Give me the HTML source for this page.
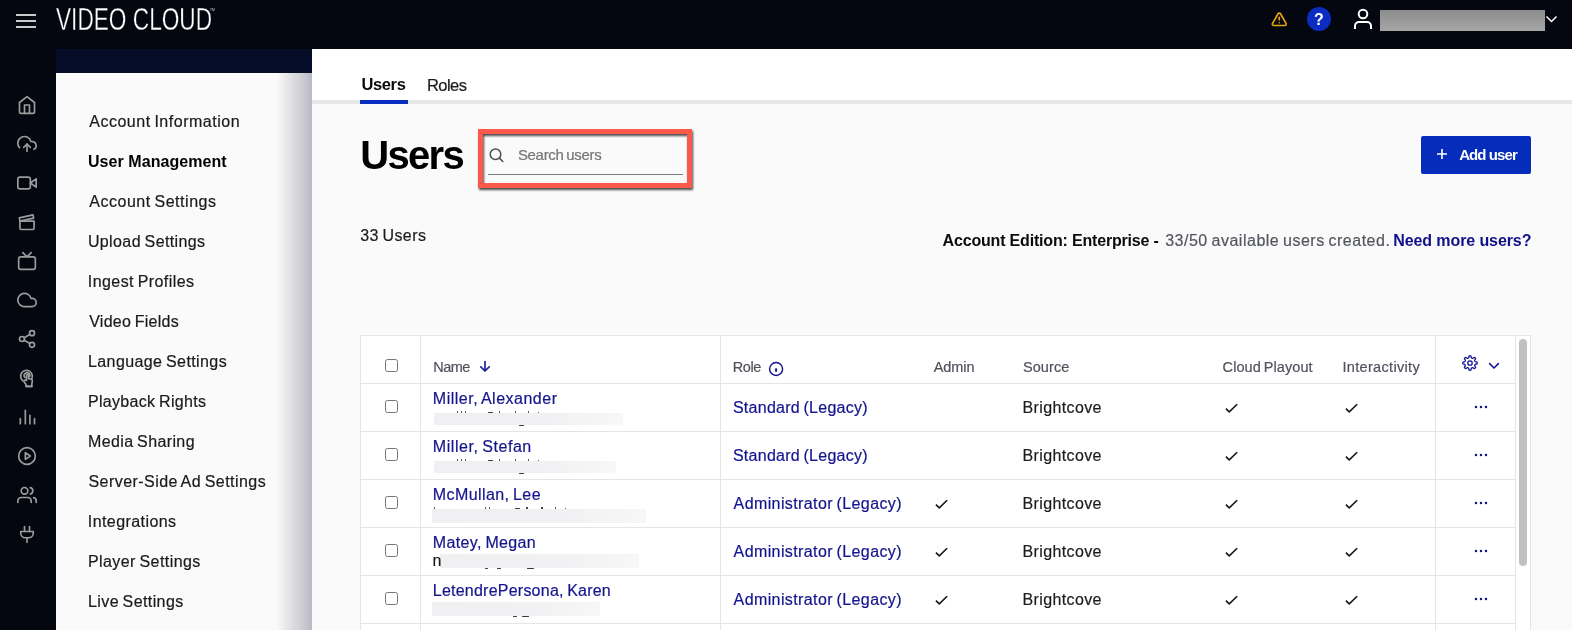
<!DOCTYPE html>
<html lang="en">
<head>
<meta charset="utf-8">
<title>Video Cloud - Users</title>
<style>
*{box-sizing:border-box;margin:0;padding:0}
html,body{width:1572px;height:630px;overflow:hidden;background:#fafafa;font-family:"Liberation Sans",sans-serif;color:#111}
.a,.t,.ri{position:absolute;display:block}
.t{white-space:nowrap;-webkit-text-stroke:0.2px}
.t[style*=bold]{-webkit-text-stroke:0}
header,aside,nav,main{will-change:transform}
i{font-style:normal}
h1{font-weight:bold}a{text-decoration:none}
header,nav,main,section,aside{position:absolute;left:0;top:0}
#top{left:0;top:0;width:1572px;height:49px;background:#04070f}
#railbg{left:0;top:49px;width:56px;height:581px;background:#04070f}
.ri{left:17px}
#strip{left:56px;top:49px;width:256px;height:24px;background:#060d29}
#sidebg{left:56px;top:73px;width:256px;height:557px;background:#fafafa}
#sideshadow{left:276px;top:73px;width:36px;height:557px;background:linear-gradient(to right,#fafafa 0,#ebebed 25%,#dadade 50%,#cbcbd2 75%,#b9b9c6 100%)}
#tabbg{left:312px;top:49px;width:1260px;height:51px;background:#fff}
#tabline{left:312px;top:100px;width:1260px;height:4px;background:#e6e7e8}
#tabon{left:360px;top:100px;width:48px;height:4px;background:#0a2cc0}
.logo{left:56px;top:0.9px;font-size:31.5px;line-height:36px;color:#fff;white-space:nowrap;transform-origin:0 0;transform:scaleX(0.719);-webkit-text-stroke:0.35px #04070f}
.tm{left:209.5px;top:7px;font-size:4px;line-height:5px;color:#ddd;transform-origin:0 0;transform:scaleX(0.8)}
.hb{left:16px;width:20px;height:2px;background:#c9c9c9}
#help{left:1307px;top:7px;width:24px;height:24px;border-radius:12px;background:#0a2cc0;color:#fff;font-weight:bold;font-size:16px;line-height:25.5px;text-align:center}
#acct{left:1380px;top:10px;width:165px;height:21px;background:linear-gradient(to bottom,#8c8c8c,#a6a6a6)}
#redbox{left:478px;top:129px;width:214px;height:59px;border:5px solid #fb5a4b;filter:drop-shadow(1px 2px 1.3px rgba(0,0,0,.7))}
#sline{left:488px;top:174px;width:195px;height:1px;background:#7a7a7a}
#addbtn{left:1421px;top:136px;width:110px;height:38px;background:#062cbb;border-radius:2px}
#tblbg{left:360px;top:335px;width:1171px;height:295px;background:#fff}
.hl{left:360px;width:1156px;height:1px;background:#e4e6e6}
.vl{top:335px;width:1px;height:295px;background:#e4e6e6}
.cb{width:13px;height:13px;border:1px solid #767676;border-radius:2.5px;background:#fff}
.rd{background:linear-gradient(to right,#f0f0f2,#f1f1f3 60%,#f7f7f8)}
.sk{background:#3a3a3e;border-radius:.5px}
#thumb{left:1519px;top:339px;width:8px;height:227px;border-radius:4px;background:#c1c1c1}
</style>
</head>
<body>
<header>
<div class="a" id="top"></div>
<i class="a hb" style="top:14px"></i><i class="a hb" style="top:20px"></i><i class="a hb" style="top:26px"></i>
<div class="a logo">VIDEO CLOUD</div><span class="a tm">TM</span>
<svg class="a" style="left:1270.7px;top:10.5px" width="16.600" height="16.600" viewBox="0 0 24 24" fill="none" stroke="#eaa40e" stroke-width="2.4" stroke-linecap="round" stroke-linejoin="round"><path d="m21.73 18-8-14a2 2 0 0 0-3.48 0l-8 14A2 2 0 0 0 4 21h16a2 2 0 0 0 1.73-3z"/><path d="M12 9v4"/><path d="M12 17h.01"/></svg>
<div class="a" id="help">?</div>
<svg class="a" style="left:1351px;top:7px" width="24" height="24" viewBox="0 0 24 24" fill="none" stroke="#fff" stroke-width="2" stroke-linecap="butt" stroke-linejoin="round"><path d="M20 22v-3a4 4 0 0 0-4-4H8a4 4 0 0 0-4 4v3"/><circle cx="12" cy="7" r="4.3"/></svg>
<div class="a" id="acct"></div>
<svg class="a" style="left:1545px;top:14px" width="13" height="10" viewBox="0 0 13 10" fill="none" stroke="#fff" stroke-width="1.5"><path d="M1.5 2.5 6.5 7.5 11.5 2.5"/></svg>
</header>
<aside>
<div class="a" id="railbg"></div>
<svg class="ri" style="top:95px" viewBox="0 0 24 24" width="20" height="20" fill="none" stroke="#9c9c9c" stroke-width="2" stroke-linecap="round" stroke-linejoin="round"><path d="M3 9l9-7 9 7v11a2 2 0 0 1-2 2H5a2 2 0 0 1-2-2z"/><path d="M9 22V12h6v10"/></svg>
<svg class="ri" style="top:134px" viewBox="0 0 24 24" width="20" height="20" fill="none" stroke="#9c9c9c" stroke-width="2" stroke-linecap="round" stroke-linejoin="round"><path d="m16 16-4-4-4 4"/><path d="M12 12v9"/><path d="M20.39 18.39A5 5 0 0 0 18 9h-1.26A8 8 0 1 0 3 16.3"/></svg>
<svg class="ri" style="top:173px" viewBox="0 0 24 24" width="20" height="20" fill="none" stroke="#9c9c9c" stroke-width="2" stroke-linecap="round" stroke-linejoin="round"><path d="m23 7-7 5 7 5V7z"/><rect x="1" y="5" width="15" height="14" rx="2.5"/></svg>
<svg class="ri" style="top:212px" viewBox="0 0 24 24" width="20" height="20" fill="none" stroke="#9c9c9c" stroke-width="2" stroke-linecap="round" stroke-linejoin="round"><path d="M3.5 11v8.5a1.5 1.5 0 0 0 1.5 1.500h14a1.500 1.500 0 0 0 1.500-1.500V11h-17z"/><path d="M3.500 11 2.800 7 19.200 3.400 20 7.300 3.500 11z"/></svg>
<svg class="ri" style="top:251px" viewBox="0 0 24 24" width="20" height="20" fill="none" stroke="#9c9c9c" stroke-width="2" stroke-linecap="round" stroke-linejoin="round"><rect x="2" y="7" width="20" height="15" rx="2.5"/><path d="m17 2-5 5-5-5"/></svg>
<svg class="ri" style="top:290px" viewBox="0 0 24 24" width="20" height="20" fill="none" stroke="#9c9c9c" stroke-width="2" stroke-linecap="round" stroke-linejoin="round"><path d="M18 10h-1.260A8 8 0 1 0 9 20h9a5 5 0 0 0 0-10z"/></svg>
<svg class="ri" style="top:329px" viewBox="0 0 24 24" width="20" height="20" fill="none" stroke="#9c9c9c" stroke-width="2" stroke-linecap="round" stroke-linejoin="round"><circle cx="18" cy="5" r="3"/><circle cx="6" cy="12" r="3"/><circle cx="18" cy="19" r="3"/><path d="m8.590 13.510 6.830 3.980M15.410 6.510l-6.820 3.980"/></svg>
<svg class="ri" style="top:368px" viewBox="0 0 24 24" width="20" height="20" fill="none" stroke="#9c9c9c" stroke-width="2" stroke-linecap="round" stroke-linejoin="round"><path d="M7.200 15.400A7 7 0 1 1 17.600 13"/><path d="M9.600 11.400a3.400 3.400 0 1 1 5.600-1.200"/><path d="M11.500 14.500V8.700a1.200 1.200 0 0 1 2.400 0v4.100l3.300.7a1.600 1.600 0 0 1 1.200 1.800l-.6 4.200v2.600h-7v-2.400l-2.300-3.300a1.300 1.300 0 0 1 2-1.600z"/><path d="M11 22h7"/></svg>
<svg class="ri" style="top:407px" viewBox="0 0 24 24" width="20" height="20" fill="none" stroke="#9c9c9c" stroke-width="2" stroke-linecap="round" stroke-linejoin="round"><path d="M4 14v6M10 4v16M15.500 10v10M21 14v6"/></svg>
<svg class="ri" style="top:446px" viewBox="0 0 24 24" width="20" height="20" fill="none" stroke="#9c9c9c" stroke-width="2" stroke-linecap="round" stroke-linejoin="round"><circle cx="12" cy="12" r="10"/><path d="m10 8 6 4-6 4V8z"/></svg>
<svg class="ri" style="top:485px" viewBox="0 0 24 24" width="20" height="20" fill="none" stroke="#9c9c9c" stroke-width="2" stroke-linecap="round" stroke-linejoin="round"><path d="M17 21v-2a4 4 0 0 0-4-4H5a4 4 0 0 0-4 4v2"/><circle cx="9" cy="7" r="4"/><path d="M23 21v-2a4 4 0 0 0-3-3.870"/><path d="M16 3.130a4 4 0 0 1 0 7.750"/></svg>
<svg class="ri" style="top:524px" viewBox="0 0 24 24" width="20" height="20" fill="none" stroke="#9c9c9c" stroke-width="2" stroke-linecap="round" stroke-linejoin="round"><path d="M12 16.500V22"/><path d="M9 9V3"/><path d="M15 9V3"/><path d="M4.500 9h15v2a5.500 5.500 0 0 1-5.500 5.500h-4A5.500 5.500 0 0 1 4.500 11V9z"/></svg>
</aside>
<nav>
<div class="a" id="strip"></div>
<div class="a" id="sidebg"></div>
<div class="a" id="sideshadow"></div>
<a class="t" style="left:89.2px;top:111.9px;font-size:16px;line-height:20px;color:#1a1a1a;letter-spacing:0.52px;word-spacing:-1.2px;">Account Information</a>
<a class="t" style="left:87.9px;top:151.9px;font-size:16px;line-height:20px;color:#000;letter-spacing:0.07px;font-weight:bold;">User Management</a>
<a class="t" style="left:89.2px;top:191.9px;font-size:16px;line-height:20px;color:#1a1a1a;letter-spacing:0.53px;word-spacing:-1.2px;">Account Settings</a>
<a class="t" style="left:87.9px;top:231.9px;font-size:16px;line-height:20px;color:#1a1a1a;letter-spacing:0.39px;word-spacing:-1.2px;">Upload Settings</a>
<a class="t" style="left:87.8px;top:271.9px;font-size:16px;line-height:20px;color:#1a1a1a;letter-spacing:0.43px;word-spacing:-1.2px;">Ingest Profiles</a>
<a class="t" style="left:89.2px;top:311.9px;font-size:16px;line-height:20px;color:#1a1a1a;letter-spacing:0.27px;word-spacing:-1.2px;">Video Fields</a>
<a class="t" style="left:88.0px;top:351.9px;font-size:16px;line-height:20px;color:#1a1a1a;letter-spacing:0.40px;word-spacing:-1.2px;">Language Settings</a>
<a class="t" style="left:87.9px;top:391.9px;font-size:16px;line-height:20px;color:#1a1a1a;letter-spacing:0.33px;word-spacing:-1.2px;">Playback Rights</a>
<a class="t" style="left:88.0px;top:431.9px;font-size:16px;line-height:20px;color:#1a1a1a;letter-spacing:0.38px;word-spacing:-1.2px;">Media Sharing</a>
<a class="t" style="left:88.5px;top:471.9px;font-size:16px;line-height:20px;color:#1a1a1a;letter-spacing:0.44px;word-spacing:-1.2px;">Server-Side Ad Settings</a>
<a class="t" style="left:87.8px;top:511.9px;font-size:16px;line-height:20px;color:#1a1a1a;letter-spacing:0.42px;">Integrations</a>
<a class="t" style="left:87.9px;top:551.9px;font-size:16px;line-height:20px;color:#1a1a1a;letter-spacing:0.43px;word-spacing:-1.2px;">Player Settings</a>
<a class="t" style="left:88.0px;top:591.9px;font-size:16px;line-height:20px;color:#1a1a1a;letter-spacing:0.40px;word-spacing:-1.2px;">Live Settings</a>
</nav>
<main>
<div class="a" id="tabbg"></div>
<div class="a" id="tabline"></div>
<div class="a" id="tabon"></div>
<a class="t" style="left:361.5px;top:74.4px;font-size:16.5px;line-height:20px;color:#0b0b0b;letter-spacing:-0.39px;font-weight:bold;">Users</a>
<a class="t" style="left:427.0px;top:74.8px;font-size:16.5px;line-height:20px;color:#1a1a1a;letter-spacing:-0.55px;">Roles</a>
<section>
<div class="a" id="addbtn"></div>
<h1 class="t" style="left:360.2px;top:131.2px;font-size:40px;line-height:48px;color:#000;letter-spacing:-1.65px;font-weight:bold;">Users</h1>
<label class="t" style="left:517.9px;top:145.2px;font-size:15px;line-height:20px;color:#757575;letter-spacing:-0.31px;word-spacing:-1.2px;">Search users</label>
<b class="t" style="left:1459.2px;top:144.5px;font-size:15px;line-height:20px;color:#fff;letter-spacing:-0.92px;font-weight:bold;">Add user</b>
<span class="t" style="left:360.2px;top:225.9px;font-size:16px;line-height:20px;color:#1a1a1a;letter-spacing:0.41px;word-spacing:-1.2px;">33 Users</span>
<span class="t" style="left:942.6px;top:230.7px;font-size:16px;line-height:20px;color:#0b0b0b;letter-spacing:-0.18px;font-weight:bold;">Account Edition: Enterprise -</span>
<span class="t" style="left:1165.2px;top:230.7px;font-size:16px;line-height:20px;color:#53565e;letter-spacing:0.51px;word-spacing:-1.2px;">33/50 available users created.</span>
<a class="t" style="left:1393.2px;top:231.0px;font-size:16px;line-height:20px;color:#10108a;letter-spacing:-0.09px;font-weight:bold;">Need more users?</a>
<svg class="a" style="left:488px;top:147px" width="17" height="17" viewBox="0 0 17 17" fill="none" stroke="#4a4d57" stroke-width="1.5" stroke-linecap="round"><circle cx="7.5" cy="7.2" r="5.3"/><path d="m11.4 11.1 3.4 3.4"/></svg>
<div class="a" id="sline"></div>
<div class="a" id="redbox"></div>
<svg class="a" style="left:1436px;top:148px" width="12" height="12" viewBox="0 0 12 12" stroke="#fff" stroke-width="1.6" fill="none"><path d="M6 1v10M1 6h10"/></svg>
</section>
<section>
<div class="a" id="tblbg"></div>
<i class="a hl" style="top:335px;width:1171px"></i>
<i class="a hl" style="top:383px"></i>
<i class="a hl" style="top:431px"></i>
<i class="a hl" style="top:479px"></i>
<i class="a hl" style="top:527px"></i>
<i class="a hl" style="top:575px"></i>
<i class="a hl" style="top:623px"></i>
<i class="a vl" style="left:360px"></i>
<i class="a vl" style="left:420px"></i>
<i class="a vl" style="left:720px"></i>
<i class="a vl" style="left:1435px"></i>
<i class="a vl" style="left:1515px"></i>
<i class="a vl" style="left:1530px"></i>
<span class="a cb" style="left:385px;top:359px"></span>
<svg class="a" style="left:479px;top:360px" width="12" height="13" viewBox="0 0 12 13" fill="none" stroke="#1f1fa0" stroke-width="1.7" stroke-linecap="round" stroke-linejoin="round"><path d="M6 1.6v9.4M1.8 6.8 6 11l4.2-4.2"/></svg>
<svg class="a" style="left:768px;top:361px" width="16" height="16" viewBox="0 0 16 16" fill="none" stroke="#10108c" stroke-width="1.4"><circle cx="8.1" cy="8" r="6.5"/><path d="M8.1 7.4v3.4" stroke-width="1.9"/></svg>
<svg class="a" style="left:1462px;top:355px" width="16" height="16" viewBox="0 0 16 16" fill="none" stroke="#14148f" stroke-width="1.3" stroke-linejoin="round"><path d="M8.00,0.76 8.28,0.77 8.57,0.82 8.83,0.95 9.05,1.35 9.17,2.11 9.28,2.68 9.44,2.90 9.62,3.00 9.82,3.08 10.01,3.15 10.20,3.24 10.39,3.32 10.59,3.38 10.86,3.34 11.33,3.01 11.96,2.55 12.40,2.42 12.68,2.52 12.91,2.69 13.12,2.88 13.31,3.09 13.48,3.32 13.58,3.60 13.45,4.04 12.99,4.67 12.66,5.14 12.62,5.41 12.68,5.61 12.76,5.80 12.85,5.99 12.92,6.18 13.00,6.38 13.10,6.56 13.32,6.72 13.89,6.83 14.65,6.95 15.05,7.17 15.18,7.43 15.23,7.72 15.24,8.00 15.23,8.28 15.18,8.57 15.05,8.83 14.65,9.05 13.89,9.17 13.32,9.28 13.10,9.44 13.00,9.62 12.92,9.82 12.85,10.01 12.76,10.20 12.68,10.39 12.62,10.59 12.66,10.86 12.99,11.33 13.45,11.96 13.58,12.40 13.48,12.68 13.31,12.91 13.12,13.12 12.91,13.31 12.68,13.48 12.40,13.58 11.96,13.45 11.33,12.99 10.86,12.66 10.59,12.62 10.39,12.68 10.20,12.76 10.01,12.85 9.82,12.92 9.62,13.00 9.44,13.10 9.28,13.32 9.17,13.89 9.05,14.65 8.83,15.05 8.57,15.18 8.28,15.23 8.00,15.24 7.72,15.23 7.43,15.18 7.17,15.05 6.95,14.65 6.83,13.89 6.72,13.32 6.56,13.10 6.38,13.00 6.18,12.92 5.99,12.85 5.80,12.76 5.61,12.68 5.41,12.62 5.14,12.66 4.67,12.99 4.04,13.45 3.60,13.58 3.32,13.48 3.09,13.31 2.88,13.12 2.69,12.91 2.52,12.68 2.42,12.40 2.55,11.96 3.01,11.33 3.34,10.86 3.38,10.59 3.32,10.39 3.24,10.20 3.15,10.01 3.08,9.82 3.00,9.62 2.90,9.44 2.68,9.28 2.11,9.17 1.35,9.05 0.95,8.83 0.82,8.57 0.77,8.28 0.76,8.00 0.77,7.72 0.82,7.43 0.95,7.17 1.35,6.95 2.11,6.83 2.68,6.72 2.90,6.56 3.00,6.38 3.08,6.18 3.15,5.99 3.24,5.80 3.32,5.61 3.38,5.41 3.34,5.14 3.01,4.67 2.55,4.04 2.42,3.60 2.52,3.32 2.69,3.09 2.88,2.88 3.09,2.69 3.32,2.52 3.60,2.42 4.04,2.55 4.67,3.01 5.14,3.34 5.41,3.38 5.61,3.32 5.80,3.24 5.99,3.15 6.18,3.08 6.38,3.00 6.56,2.90 6.72,2.68 6.83,2.11 6.95,1.35 7.17,0.95 7.43,0.82 7.72,0.77z"/><circle cx="8" cy="8" r="2.2"/></svg>
<svg class="a" style="left:1488px;top:361px" width="12" height="9" viewBox="0 0 12 9" fill="none" stroke="#14148f" stroke-width="1.5" stroke-linecap="round"><path d="M1.6 2.6 6 7 10.4 2.6"/></svg>
<i class="a sk" style="left:456.6px;top:411.2px;width:1.3px;height:1.8px"></i>
<i class="a sk" style="left:461.2px;top:411.2px;width:1.3px;height:1.8px"></i>
<i class="a sk" style="left:464.6px;top:411.2px;width:1.3px;height:1.8px"></i>
<i class="a sk" style="left:488px;top:411.8px;width:5px;height:1.0px"></i>
<i class="a sk" style="left:498.6px;top:411.2px;width:1.4px;height:1.8px"></i>
<i class="a sk" style="left:514.6px;top:411.2px;width:1.4px;height:1.8px"></i>
<i class="a sk" style="left:528px;top:411.2px;width:1.4px;height:1.8px"></i>
<i class="a sk" style="left:538.2px;top:412.0px;width:1.2px;height:1.0px"></i>
<i class="a sk" style="left:518.8px;top:425.0px;width:5.5px;height:1.1px"></i>
<i class="a sk" style="left:456.6px;top:459.2px;width:1.3px;height:1.8px"></i>
<i class="a sk" style="left:461.2px;top:459.2px;width:1.3px;height:1.8px"></i>
<i class="a sk" style="left:464.6px;top:459.2px;width:1.3px;height:1.8px"></i>
<i class="a sk" style="left:488px;top:459.8px;width:5px;height:1.0px"></i>
<i class="a sk" style="left:498.6px;top:459.2px;width:1.4px;height:1.8px"></i>
<i class="a sk" style="left:514.6px;top:459.2px;width:1.4px;height:1.8px"></i>
<i class="a sk" style="left:528px;top:459.2px;width:1.4px;height:1.8px"></i>
<i class="a sk" style="left:538.2px;top:460.0px;width:1.2px;height:1.0px"></i>
<i class="a sk" style="left:518.8px;top:473.0px;width:5.5px;height:1.1px"></i>
<i class="a sk" style="left:434px;top:507.2px;width:1.4px;height:1.8px"></i>
<i class="a sk" style="left:484.6px;top:507.2px;width:1.4px;height:1.8px"></i>
<i class="a sk" style="left:489px;top:507.2px;width:1.4px;height:1.8px"></i>
<i class="a sk" style="left:515.2px;top:507.8px;width:5px;height:1.0px"></i>
<i class="a sk" style="left:526.4px;top:507.2px;width:1.4px;height:1.8px"></i>
<i class="a sk" style="left:541.2px;top:507.2px;width:1.4px;height:1.8px"></i>
<i class="a sk" style="left:555px;top:507.2px;width:1.4px;height:1.8px"></i>
<i class="a sk" style="left:565.2px;top:508px;width:1.2px;height:1.0px"></i>
<i class="a sk" style="left:484.5px;top:567.5px;width:3.5px;height:1.6px"></i>
<i class="a sk" style="left:496.5px;top:567.5px;width:4.5px;height:1.2px"></i>
<i class="a sk" style="left:526.5px;top:567.5px;width:7.5px;height:1.7px"></i>
<i class="a sk" style="left:513px;top:615.5px;width:4px;height:1.3px"></i>
<i class="a sk" style="left:522px;top:615.5px;width:7px;height:1.5px"></i>
<span class="a rd" style="left:433.5px;top:413px;width:189.5px;height:12px"></span>
<span class="a rd" style="left:433.5px;top:461px;width:182.5px;height:12px"></span>
<span class="a rd" style="left:432px;top:509px;width:214px;height:13.5px"></span>
<span class="a rd" style="left:440px;top:554px;width:199px;height:13.5px"></span>
<span class="a rd" style="left:432px;top:602px;width:168px;height:13.5px"></span>
<span class="t" style="left:433.2px;top:357.0px;font-size:14.5px;line-height:20px;color:#50535c;letter-spacing:-0.50px;">Name</span>
<span class="t" style="left:732.8px;top:357.0px;font-size:14.5px;line-height:20px;color:#50535c;letter-spacing:-0.41px;">Role</span>
<span class="t" style="left:933.8px;top:357.0px;font-size:14.5px;line-height:20px;color:#50535c;letter-spacing:-0.10px;">Admin</span>
<span class="t" style="left:1022.9px;top:357.0px;font-size:14.5px;line-height:20px;color:#50535c;letter-spacing:0.09px;">Source</span>
<span class="t" style="left:1222.6px;top:357.0px;font-size:14.5px;line-height:20px;color:#50535c;letter-spacing:0.08px;word-spacing:-1.2px;">Cloud Playout</span>
<span class="t" style="left:1342.5px;top:357.0px;font-size:14.5px;line-height:20px;color:#50535c;letter-spacing:0.32px;">Interactivity</span>
<a class="t" style="left:432.8px;top:388.7px;font-size:16px;line-height:20px;color:#14148e;letter-spacing:0.50px;word-spacing:-1.2px;">Miller, Alexander</a>
<a class="t" style="left:732.9px;top:397.5px;font-size:16px;line-height:20px;color:#14148e;letter-spacing:0.27px;word-spacing:-1.2px;">Standard (Legacy)</a>
<span class="t" style="left:1022.5px;top:397.5px;font-size:16px;line-height:20px;color:#1d1d1f;letter-spacing:0.38px;">Brightcove</span>
<a class="t" style="left:432.8px;top:436.7px;font-size:16px;line-height:20px;color:#14148e;letter-spacing:0.55px;word-spacing:-1.2px;">Miller, Stefan</a>
<a class="t" style="left:732.9px;top:445.5px;font-size:16px;line-height:20px;color:#14148e;letter-spacing:0.27px;word-spacing:-1.2px;">Standard (Legacy)</a>
<span class="t" style="left:1022.5px;top:445.5px;font-size:16px;line-height:20px;color:#1d1d1f;letter-spacing:0.38px;">Brightcove</span>
<a class="t" style="left:432.8px;top:484.7px;font-size:16px;line-height:20px;color:#14148e;letter-spacing:0.41px;word-spacing:-1.2px;">McMullan, Lee</a>
<a class="t" style="left:733.6px;top:493.5px;font-size:16px;line-height:20px;color:#14148e;letter-spacing:0.39px;word-spacing:-1.2px;">Administrator (Legacy)</a>
<span class="t" style="left:1022.5px;top:493.5px;font-size:16px;line-height:20px;color:#1d1d1f;letter-spacing:0.38px;">Brightcove</span>
<a class="t" style="left:432.8px;top:532.7px;font-size:16px;line-height:20px;color:#14148e;letter-spacing:0.36px;word-spacing:-1.2px;">Matey, Megan</a>
<a class="t" style="left:733.6px;top:541.5px;font-size:16px;line-height:20px;color:#14148e;letter-spacing:0.39px;word-spacing:-1.2px;">Administrator (Legacy)</a>
<span class="t" style="left:1022.5px;top:541.5px;font-size:16px;line-height:20px;color:#1d1d1f;letter-spacing:0.38px;">Brightcove</span>
<a class="t" style="left:432.8px;top:580.7px;font-size:16px;line-height:20px;color:#14148e;letter-spacing:0.23px;word-spacing:-1.2px;">LetendrePersona, Karen</a>
<a class="t" style="left:733.6px;top:589.5px;font-size:16px;line-height:20px;color:#14148e;letter-spacing:0.39px;word-spacing:-1.2px;">Administrator (Legacy)</a>
<span class="t" style="left:1022.5px;top:589.5px;font-size:16px;line-height:20px;color:#1d1d1f;letter-spacing:0.38px;">Brightcove</span>
<span class="t" style="left:432.6px;top:551.1px;font-size:16px;line-height:20px;color:#1d1d1f;">n</span>
<span class="a cb" style="left:385px;top:400px"></span>
<svg class="a ck" style="left:1224.5px;top:402.8px" width="14" height="11" viewBox="0 0 14 11"><path d="M0.9 5.6 4.3 8.9 12.1 1.2" fill="none" stroke="#14161d" stroke-width="1.6"/></svg>
<svg class="a ck" style="left:1344.5px;top:402.8px" width="14" height="11" viewBox="0 0 14 11"><path d="M0.9 5.6 4.3 8.9 12.1 1.2" fill="none" stroke="#14161d" stroke-width="1.6"/></svg>
<svg class="a" style="left:1474px;top:405px" width="14" height="4" viewBox="0 0 14 4"><circle cx="2" cy="2" r="1.25" fill="#14148f"/><circle cx="7" cy="2" r="1.25" fill="#14148f"/><circle cx="12" cy="2" r="1.25" fill="#14148f"/></svg>
<span class="a cb" style="left:385px;top:448px"></span>
<svg class="a ck" style="left:1224.5px;top:450.8px" width="14" height="11" viewBox="0 0 14 11"><path d="M0.9 5.6 4.3 8.9 12.1 1.2" fill="none" stroke="#14161d" stroke-width="1.6"/></svg>
<svg class="a ck" style="left:1344.5px;top:450.8px" width="14" height="11" viewBox="0 0 14 11"><path d="M0.9 5.6 4.3 8.9 12.1 1.2" fill="none" stroke="#14161d" stroke-width="1.6"/></svg>
<svg class="a" style="left:1474px;top:453px" width="14" height="4" viewBox="0 0 14 4"><circle cx="2" cy="2" r="1.25" fill="#14148f"/><circle cx="7" cy="2" r="1.25" fill="#14148f"/><circle cx="12" cy="2" r="1.25" fill="#14148f"/></svg>
<span class="a cb" style="left:385px;top:496px"></span>
<svg class="a ck" style="left:934.5px;top:498.8px" width="14" height="11" viewBox="0 0 14 11"><path d="M0.9 5.6 4.3 8.9 12.1 1.2" fill="none" stroke="#14161d" stroke-width="1.6"/></svg>
<svg class="a ck" style="left:1224.5px;top:498.8px" width="14" height="11" viewBox="0 0 14 11"><path d="M0.9 5.6 4.3 8.9 12.1 1.2" fill="none" stroke="#14161d" stroke-width="1.6"/></svg>
<svg class="a ck" style="left:1344.5px;top:498.8px" width="14" height="11" viewBox="0 0 14 11"><path d="M0.9 5.6 4.3 8.9 12.1 1.2" fill="none" stroke="#14161d" stroke-width="1.6"/></svg>
<svg class="a" style="left:1474px;top:501px" width="14" height="4" viewBox="0 0 14 4"><circle cx="2" cy="2" r="1.25" fill="#14148f"/><circle cx="7" cy="2" r="1.25" fill="#14148f"/><circle cx="12" cy="2" r="1.25" fill="#14148f"/></svg>
<span class="a cb" style="left:385px;top:544px"></span>
<svg class="a ck" style="left:934.5px;top:546.8px" width="14" height="11" viewBox="0 0 14 11"><path d="M0.9 5.6 4.3 8.9 12.1 1.2" fill="none" stroke="#14161d" stroke-width="1.6"/></svg>
<svg class="a ck" style="left:1224.5px;top:546.8px" width="14" height="11" viewBox="0 0 14 11"><path d="M0.9 5.6 4.3 8.9 12.1 1.2" fill="none" stroke="#14161d" stroke-width="1.6"/></svg>
<svg class="a ck" style="left:1344.5px;top:546.8px" width="14" height="11" viewBox="0 0 14 11"><path d="M0.9 5.6 4.3 8.9 12.1 1.2" fill="none" stroke="#14161d" stroke-width="1.6"/></svg>
<svg class="a" style="left:1474px;top:549px" width="14" height="4" viewBox="0 0 14 4"><circle cx="2" cy="2" r="1.25" fill="#14148f"/><circle cx="7" cy="2" r="1.25" fill="#14148f"/><circle cx="12" cy="2" r="1.25" fill="#14148f"/></svg>
<span class="a cb" style="left:385px;top:592px"></span>
<svg class="a ck" style="left:934.5px;top:594.8px" width="14" height="11" viewBox="0 0 14 11"><path d="M0.9 5.6 4.3 8.9 12.1 1.2" fill="none" stroke="#14161d" stroke-width="1.6"/></svg>
<svg class="a ck" style="left:1224.5px;top:594.8px" width="14" height="11" viewBox="0 0 14 11"><path d="M0.9 5.6 4.3 8.9 12.1 1.2" fill="none" stroke="#14161d" stroke-width="1.6"/></svg>
<svg class="a ck" style="left:1344.5px;top:594.8px" width="14" height="11" viewBox="0 0 14 11"><path d="M0.9 5.6 4.3 8.9 12.1 1.2" fill="none" stroke="#14161d" stroke-width="1.6"/></svg>
<svg class="a" style="left:1474px;top:597px" width="14" height="4" viewBox="0 0 14 4"><circle cx="2" cy="2" r="1.25" fill="#14148f"/><circle cx="7" cy="2" r="1.25" fill="#14148f"/><circle cx="12" cy="2" r="1.25" fill="#14148f"/></svg>
<div class="a" id="thumb"></div>
</section>
</main>
</body>
</html>
